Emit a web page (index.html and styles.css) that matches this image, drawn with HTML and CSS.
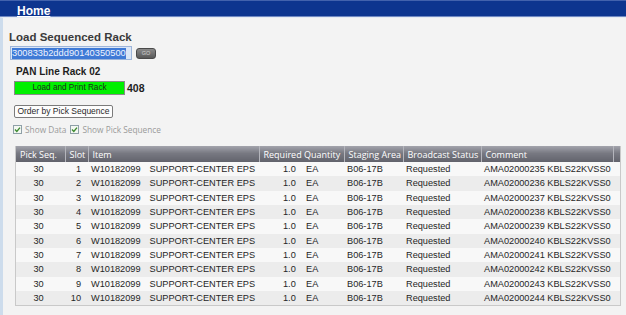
FILE: index.html
```html
<!DOCTYPE html>
<html lang="en">
<head>
  <meta charset="UTF-8">
  <title>Load Sequenced Rack</title>
  <link rel="stylesheet" href="styles.css">
</head>
<body>
  <div class="nav">
    <a href="#" class="nav-link">Home</a>
  </div>

  <div class="page">
    <h1 class="title">Load Sequenced Rack</h1>

    <div class="scan-row">
      <div class="scan-input"><span class="selected">300833b2ddd90140350500</span></div>
      <button class="go-btn">GO</button>
    </div>

    <div class="rack-name">PAN Line Rack 02</div>

    <div class="load-row">
      <button class="load-btn">Load and Print Rack</button>
      <span class="count">408</span>
    </div>

    <button class="order-btn">Order by Pick Sequence</button>

    <div class="options">
      <label class="opt">
        <svg class="check" width="9" height="9" viewBox="0 0 9 9"><rect x="0.5" y="0.5" width="8" height="8" fill="#f4f8f2" stroke="#8fa0a8"/><path d="M2 4.6 L3.8 6.4 L7 2.6" fill="none" stroke="#3c8a2e" stroke-width="1.4"/></svg>
        Show Data
      </label>
      <label class="opt">
        <svg class="check" width="9" height="9" viewBox="0 0 9 9"><rect x="0.5" y="0.5" width="8" height="8" fill="#f4f8f2" stroke="#8fa0a8"/><path d="M2 4.6 L3.8 6.4 L7 2.6" fill="none" stroke="#3c8a2e" stroke-width="1.4"/></svg>
        Show Pick Sequence
      </label>
    </div>

    <div class="grid-wrap">
      <table class="grid">
        <colgroup>
          <col class="c-seq"><col class="c-slot"><col class="c-item"><col class="c-qty">
          <col class="c-stage"><col class="c-status"><col class="c-comment"><col class="c-scroll">
        </colgroup>
        <thead>
          <tr>
            <th>Pick Seq.</th><th>Slot</th><th>Item</th><th>Required Quantity</th>
            <th>Staging Area</th><th>Broadcast Status</th><th>Comment</th><th></th>
          </tr>
        </thead>
        <tbody>
          <tr><td class="seq">30</td><td class="slot">1</td><td><span class="part">W10182099</span><span class="desc">SUPPORT-CENTER EPS</span></td><td class="qty"><span class="num">1.0</span>EA</td><td>B06-17B</td><td>Requested</td><td>AMA02000235 KBLS22KVSS0</td><td></td></tr>
          <tr><td class="seq">30</td><td class="slot">2</td><td><span class="part">W10182099</span><span class="desc">SUPPORT-CENTER EPS</span></td><td class="qty"><span class="num">1.0</span>EA</td><td>B06-17B</td><td>Requested</td><td>AMA02000236 KBLS22KVSS0</td><td></td></tr>
          <tr><td class="seq">30</td><td class="slot">3</td><td><span class="part">W10182099</span><span class="desc">SUPPORT-CENTER EPS</span></td><td class="qty"><span class="num">1.0</span>EA</td><td>B06-17B</td><td>Requested</td><td>AMA02000237 KBLS22KVSS0</td><td></td></tr>
          <tr><td class="seq">30</td><td class="slot">4</td><td><span class="part">W10182099</span><span class="desc">SUPPORT-CENTER EPS</span></td><td class="qty"><span class="num">1.0</span>EA</td><td>B06-17B</td><td>Requested</td><td>AMA02000238 KBLS22KVSS0</td><td></td></tr>
          <tr><td class="seq">30</td><td class="slot">5</td><td><span class="part">W10182099</span><span class="desc">SUPPORT-CENTER EPS</span></td><td class="qty"><span class="num">1.0</span>EA</td><td>B06-17B</td><td>Requested</td><td>AMA02000239 KBLS22KVSS0</td><td></td></tr>
          <tr><td class="seq">30</td><td class="slot">6</td><td><span class="part">W10182099</span><span class="desc">SUPPORT-CENTER EPS</span></td><td class="qty"><span class="num">1.0</span>EA</td><td>B06-17B</td><td>Requested</td><td>AMA02000240 KBLS22KVSS0</td><td></td></tr>
          <tr><td class="seq">30</td><td class="slot">7</td><td><span class="part">W10182099</span><span class="desc">SUPPORT-CENTER EPS</span></td><td class="qty"><span class="num">1.0</span>EA</td><td>B06-17B</td><td>Requested</td><td>AMA02000241 KBLS22KVSS0</td><td></td></tr>
          <tr><td class="seq">30</td><td class="slot">8</td><td><span class="part">W10182099</span><span class="desc">SUPPORT-CENTER EPS</span></td><td class="qty"><span class="num">1.0</span>EA</td><td>B06-17B</td><td>Requested</td><td>AMA02000242 KBLS22KVSS0</td><td></td></tr>
          <tr><td class="seq">30</td><td class="slot">9</td><td><span class="part">W10182099</span><span class="desc">SUPPORT-CENTER EPS</span></td><td class="qty"><span class="num">1.0</span>EA</td><td>B06-17B</td><td>Requested</td><td>AMA02000243 KBLS22KVSS0</td><td></td></tr>
          <tr><td class="seq">30</td><td class="slot">10</td><td><span class="part">W10182099</span><span class="desc">SUPPORT-CENTER EPS</span></td><td class="qty"><span class="num">1.0</span>EA</td><td>B06-17B</td><td>Requested</td><td>AMA02000244 KBLS22KVSS0</td><td></td></tr>
        </tbody>
      </table>
    </div>
  </div>
</body>
</html>
```

FILE: styles.css
```css
/* Rack loading screen */
body {
  margin: 0;
  background-color: #f3f3f3;
  font-family: 'Liberation Sans', Arial, sans-serif;
  color: #222;
  height: 315px;
  overflow: hidden;
}

.nav {
  height: 15px;
  background-color: #0d358f;
  border-top: 1px solid #4262ad;
  border-bottom: 1px solid #6f88c2;
  padding-left: 17px;
}

.nav-link {
  color: #fff;
  font-weight: bold;
  font-size: 12px;
  line-height: 15px;
  text-decoration: underline;
}

.page {
  border-left: 3px solid #cddcec;
  border-top: 1px solid #e4eaf2;
  padding-left: 6px;
  height: 300px;
}

.title {
  margin: 12px 0 0;
  font-size: 11.5px;
  line-height: 14px;
  font-weight: bold;
  color: #3a3a3a;
}

.scan-row {
  display: flex;
  align-items: center;
  margin-top: 2px;
  height: 14px;
}

.scan-input {
  width: 122px;
  height: 14px;
  box-sizing: border-box;
  margin-left: 1px;
  border: 1px solid #9db5da;
  background-color: #dbe6f6;
  display: flex;
  align-items: center;
  padding-left: 1px;
  overflow: hidden;
}

.selected {
  background-color: #3f7ad6;
  color: #eef3ff;
  font-size: 9.3px;
  line-height: 11px;
  white-space: nowrap;
}

.go-btn {
  margin-left: 4px;
  width: 20px;
  height: 11px;
  padding: 0;
  border: 1px solid #4a4a4a;
  border-radius: 3px;
  background: linear-gradient(#8a8a8a, #585858);
  color: #cfcfcf;
  font-family: 'Liberation Sans', Arial, sans-serif;
  font-size: 5.5px;
  line-height: 9px;
}

.rack-name {
  margin: 6px 0 0 7px;
  font-size: 10px;
  line-height: 12px;
  font-weight: bold;
  color: #1e1e1e;
}

.load-row {
  display: flex;
  align-items: center;
  margin: 3px 0 0 5px;
}

.load-btn {
  width: 111px;
  height: 14px;
  padding: 0;
  border: 1px solid #8a8a8a;
  background-color: #00f000;
  color: #1a2e1a;
  font-family: 'Liberation Sans', Arial, sans-serif;
  font-size: 8.2px;
  line-height: 12px;
}

.count {
  margin-left: 2px;
  font-size: 10.5px;
  font-weight: bold;
  color: #1e1e1e;
}

.order-btn {
  display: block;
  margin: 10px 0 0 5px;
  width: 99px;
  height: 13px;
  padding: 0;
  border: 1px solid #7b7b7b;
  border-radius: 2px;
  background-color: #fdfdfd;
  color: #2a2a2a;
  font-family: 'Liberation Sans', Arial, sans-serif;
  font-size: 8.5px;
  line-height: 11px;
}

.options {
  display: flex;
  gap: 4px;
  margin: 6px 0 0 4px;
  height: 10px;
  align-items: center;
}

.opt {
  display: flex;
  align-items: center;
  gap: 3px;
  font-family: 'Open Sans', sans-serif;
  font-size: 8.3px;
  color: #9a9a9a;
}

.check {
  display: block;
}

.grid-wrap {
  margin: 12px 5px 0 6px;
  border: 1px solid #c9c9c9;
  border-top: none;
  width: 606px;
  box-sizing: border-box;
}

.grid {
  width: 100%;
  table-layout: fixed;
  border-collapse: collapse;
}

.c-seq { width: 49px; }
.c-slot { width: 23px; }
.c-item { width: 171px; }
.c-qty { width: 85px; }
.c-stage { width: 59px; }
.c-status { width: 78px; }
.c-comment { width: 132px; }
.c-scroll { width: 7px; }

.grid th {
  height: 16px;
  padding: 0 0 0 4px;
  background: linear-gradient(#a3a4ac, #787982 45%, #62636c);
  border-right: 1px solid #b4b5bc;
  color: #fff;
  font-family: 'Open Sans', sans-serif;
  font-weight: normal;
  font-size: 9px;
  text-align: left;
  white-space: nowrap;
  overflow: hidden;
}

.grid th:last-child {
  border-right: none;
}

.grid td {
  height: 14.33px;
  padding: 0 0 0 3px;
  font-size: 9.2px;
  line-height: 14px;
  color: #262626;
  white-space: nowrap;
  overflow: hidden;
}

.grid tbody tr:nth-child(odd) td {
  background-color: #f8f8f8;
}

.grid tbody tr:nth-child(even) td {
  background-color: #ececec;
}

.grid td.seq {
  text-align: center;
  padding: 0 4px 0 0;
}

.grid td.slot {
  text-align: right;
  padding: 0 7px 0 0;
}

.desc {
  margin-left: 9px;
}

.grid td.qty {
  padding-left: 24px;
}

.num {
  display: inline-block;
  width: 23px;
}
```
